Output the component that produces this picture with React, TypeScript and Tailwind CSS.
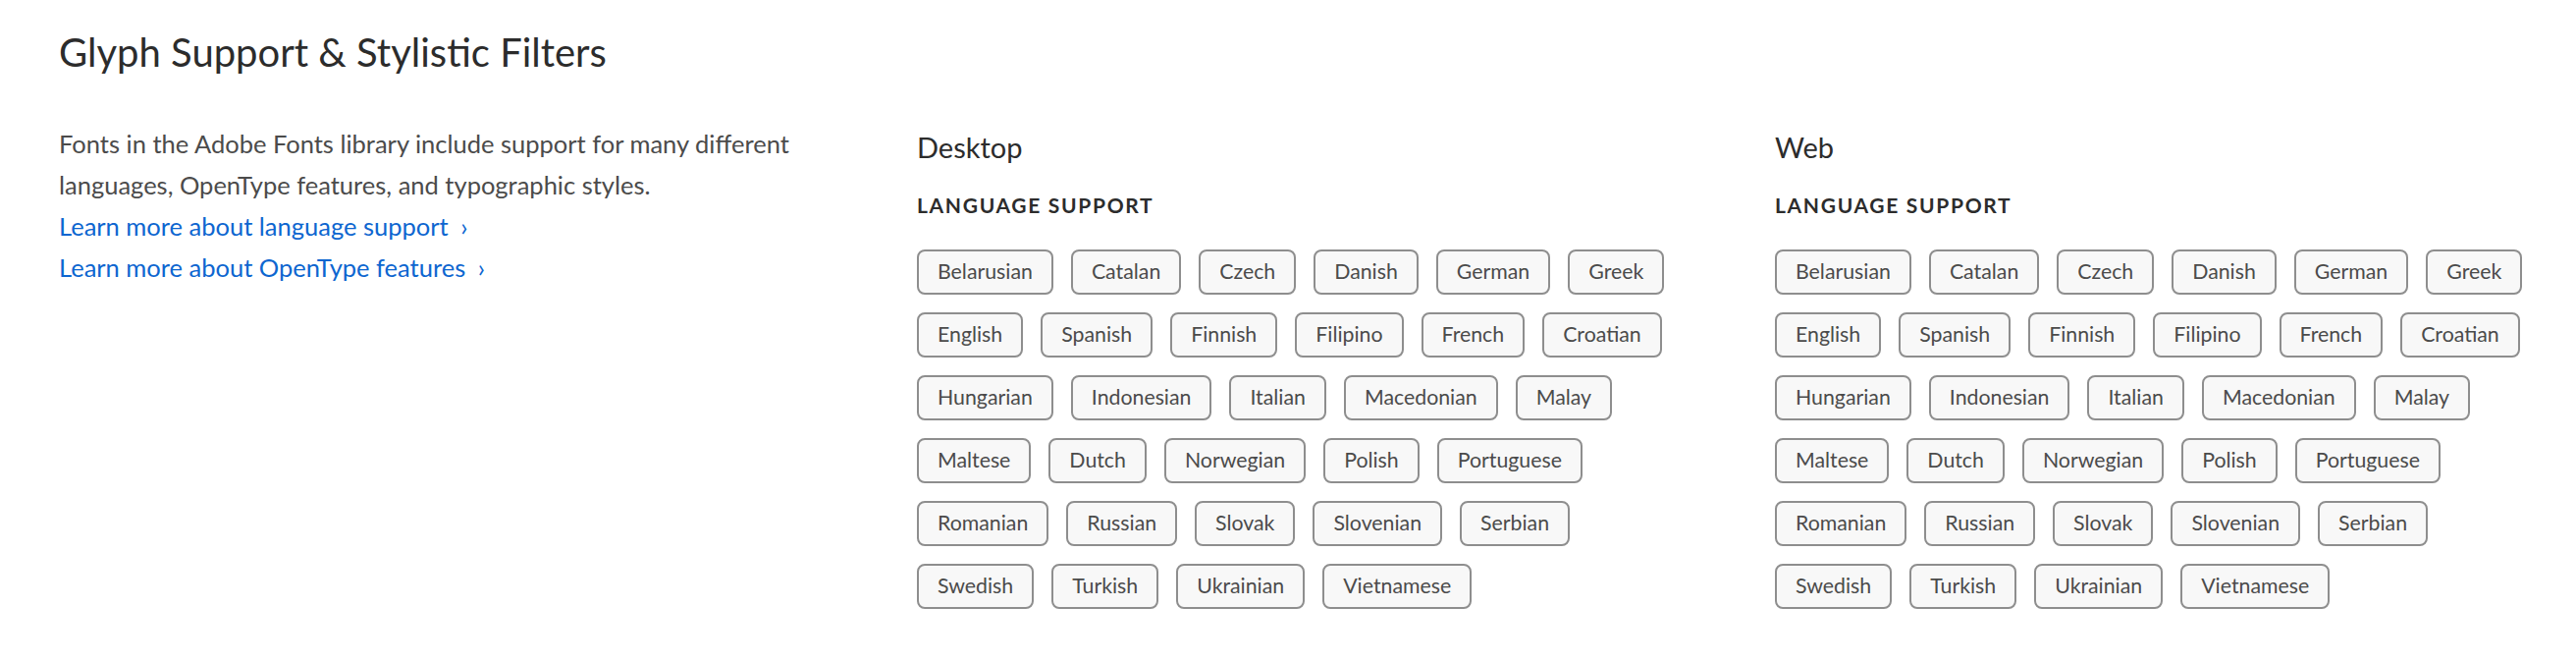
import React from 'react';

const LANGUAGES: string[][] = [
  ['Belarusian', 'Catalan', 'Czech', 'Danish', 'German', 'Greek'],
  ['English', 'Spanish', 'Finnish', 'Filipino', 'French', 'Croatian'],
  ['Hungarian', 'Indonesian', 'Italian', 'Macedonian', 'Malay'],
  ['Maltese', 'Dutch', 'Norwegian', 'Polish', 'Portuguese'],
  ['Romanian', 'Russian', 'Slovak', 'Slovenian', 'Serbian'],
  ['Swedish', 'Turkish', 'Ukrainian', 'Vietnamese'],
];

const Tag: React.FC<{ label: string }> = ({ label }) => (
  <span className="inline-flex h-[46px] items-center rounded-[8px] border-2 border-[#8e8e8e] bg-[#f8f8f8] px-[19px] text-[21.3px] text-[#4b4b4b]">
    {label}
  </span>
);

const SupportColumn: React.FC<{ title: string }> = ({ title }) => (
  <div className="pt-[7px]">
    <h3 className="text-[29px] leading-[36px] text-[#2c2c2c]">{title}</h3>
    <h4 className="mt-[28px] text-[21px] font-bold uppercase leading-[26px] tracking-[0.08em] text-[#2c2c2c]">
      Language Support
    </h4>
    <div className="mt-[32px] flex flex-col gap-[18px]">
      {LANGUAGES.map((row, i) => (
        <div key={i} className="flex gap-[18px]">
          {row.map((lang) => (
            <Tag key={lang} label={lang} />
          ))}
        </div>
      ))}
    </div>
  </div>
);

export default function App() {
  return (
    <div className="min-h-screen bg-white px-[60px] pt-[29px] font-['Lato',sans-serif]">
      <h2 className="text-[40px] leading-[48px] text-[#2c2c2c]">Glyph Support &amp; Stylistic Filters</h2>
      <div className="mt-[48px] grid grid-cols-3 gap-x-[118px]">
        <div className="text-[25.5px] leading-[42px] text-[#4b4b4b]">
          <p>
            Fonts in the Adobe Fonts library include support for many different languages, OpenType features,
            and typographic styles.
          </p>
          <a href="#" className="block text-[#0d66d0]">
            Learn more about language support <span className="ml-[6px]">›</span>
          </a>
          <a href="#" className="block text-[#0d66d0]">
            Learn more about OpenType features <span className="ml-[6px]">›</span>
          </a>
        </div>
        <SupportColumn title="Desktop" />
        <SupportColumn title="Web" />
      </div>
    </div>
  );
}
